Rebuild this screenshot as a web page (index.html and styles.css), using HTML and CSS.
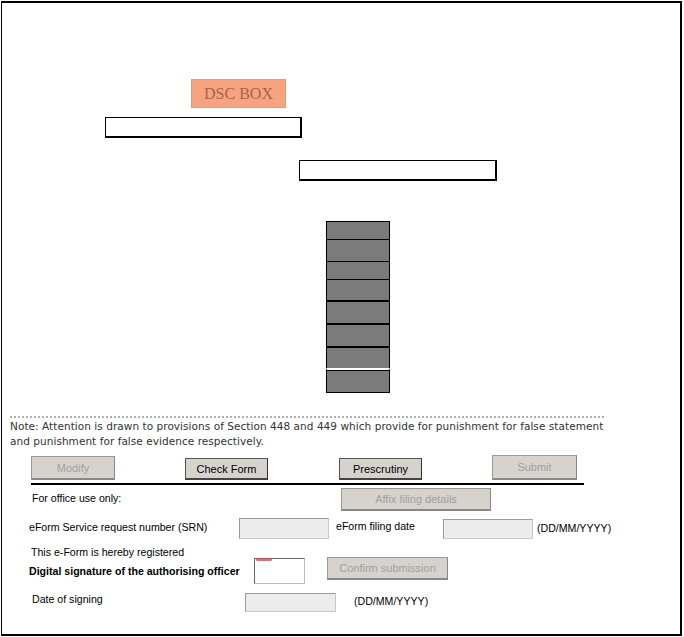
FILE: index.html
```html
<!DOCTYPE html>
<html>
<head>
<meta charset="utf-8">
<link rel="stylesheet" href="styles.css">
</head>
<body>
<div class="page">
  <div class="dsc">DSC BOX</div>
  <div class="field field1"></div>
  <div class="field field2"></div>
  <div class="stack">
    <div class="cell h18"></div>
    <div class="cell h22"></div>
    <div class="cell h18"></div>
    <div class="cell h21"></div>
    <div class="cell h23 thick"></div>
    <div class="cell h23 thick"></div>
    <div class="cell h22 thick"></div>
    <div class="cell last"></div>
  </div>
  <div class="rule"></div>
  <div class="note">Note: Attention is drawn to provisions of Section 448 and 449 which provide for punishment for false statement<br>and punishment for false evidence respectively.</div>
  <div class="btnrow">
    <div class="btn dis b-modify">Modify</div>
    <div class="btn b-check">Check Form</div>
    <div class="btn b-pre">Prescrutiny</div>
    <div class="btn dis b-submit">Submit</div>
  </div>
  <div class="blackline"></div>
  <div class="row r-office">
    <span class="lbl l-office">For office use only:</span>
    <div class="btn dis b-affix">Affix filing details</div>
  </div>
  <div class="row r-srn">
    <span class="lbl l-srn">eForm Service request number (SRN)</span>
    <div class="gbox g-srn"></div>
    <span class="lbl l-fdate">eForm filing date</span>
    <div class="gbox g-fdate"></div>
    <span class="lbl l-fmt">(DD/MM/YYYY)</span>
  </div>
  <div class="row r-reg">
    <span class="lbl l-reg">This e-Form is hereby registered</span>
  </div>
  <div class="row r-sig">
    <span class="lbl bold l-sig">Digital signature of the authorising officer</span>
    <div class="sigbox"><span class="mark"></span></div>
    <div class="btn dis b-confirm">Confirm submission</div>
  </div>
  <div class="row r-date">
    <span class="lbl l-date">Date of signing</span>
    <div class="gbox g-date"></div>
    <span class="lbl l-fmt2">(DD/MM/YYYY)</span>
  </div>
</div>
</body>
</html>
```

FILE: styles.css
```css
* { box-sizing: border-box; }
html, body { margin: 0; padding: 0; background: #fff; }
body { font-family: "Liberation Sans", Arial, sans-serif; font-size: 10.6px; color: #000; }
.page {
  margin: 1px 0 0 1px;
  width: 681px;
  height: 635px;
  border: 1px solid #000;
  border-width: 2px 2px 2px 1px;
  overflow: hidden;
}
.dsc {
  margin: 76px 0 0 189px;
  width: 95px;
  height: 29px;
  background: #f7a37f;
  border: 1px solid #e89a78;
  color: #a8644c;
  font-family: "Liberation Serif", "Times New Roman", serif;
  font-size: 16px;
  line-height: 27px;
  text-align: center;
}
.field { height: 21px; border: 1px solid #000; border-width: 1px 2px 2px 1px; background: #fff; }
.field1 { margin: 9px 0 0 103px; width: 197px; }
.field2 { margin: 22px 0 0 297px; width: 198px; }
.stack {
  margin: 40px 0 0 324px;
  width: 64px;
  border-bottom: 1px solid #000;
}
.cell {
  background: #7b7b7b;
  border-left: 1px solid #000;
  border-right: 1px solid #000;
  border-top: 1px solid #000;
}
.cell.thick { border-top-width: 2px; }
.h18 { height: 18px; }
.h21 { height: 21px; }
.h22 { height: 22px; }
.h23 { height: 23px; }
.cell.last { height: 24px; border-top: 2px solid #fff; box-shadow: inset 0 1px 0 #000; }
.rule {
  margin: 23px 0 0 8px;
  width: 594px;
  border-top: 2px dotted #b0b0b0;
}
.note {
  margin: 1px 0 0 8px;
  font-family: "DejaVu Sans", Verdana, sans-serif;
  font-size: 10.5px;
  line-height: 15px;
  color: #333;
  letter-spacing: 0.05px;
  white-space: nowrap;
}
.btnrow {
  display: flex;
  align-items: flex-end;
  height: 25px;
  margin-top: 6px;
}
.btn {
  background: #d6d3ce;
  border: 1px solid #555;
  border-right-color: #333;
  border-bottom: 2px solid #444;
  color: #000;
  font-size: 11px;
  display: flex;
  align-items: center;
  justify-content: center;
  white-space: nowrap;
}
.btn.dis { color: #a0a0a0; border-color: #999; border-bottom-color: #888; border-right-color: #888; }
.b-modify { margin-left: 29px; width: 84px; height: 24px; }
.b-check { margin-left: 70px; width: 83px; height: 22px; }
.b-pre { margin-left: 71px; width: 83px; height: 22px; }
.b-submit { margin-left: 70px; width: 85px; height: 25px; }
.blackline {
  margin: 3px 0 0 29px;
  width: 553px;
  height: 2px;
  background: #000;
}
.row { display: flex; align-items: center; }
.lbl { white-space: nowrap; position: relative; }
.bold { font-weight: bold; }
.r-office { height: 23px; margin-top: 3px; }
.l-office { margin-left: 30px; width: 309px; top: -2px; }
.b-affix { width: 150px; height: 23px; }
.r-srn { height: 21px; margin-top: 7px; }
.l-srn { margin-left: 27px; width: 210px; top: -2px; }
.gbox { background: #ececec; border: 1px solid #9a9a9a; border-color: #9a9a9a #c8c8c8 #c8c8c8 #9a9a9a; }
.g-srn { width: 90px; height: 21px; }
.l-fdate { margin-left: 7px; width: 107px; top: -3px; }
.g-fdate { width: 90px; height: 20px; }
.l-fmt { margin-left: 4px; top: -1px; }
.r-reg { height: 14px; margin-top: 6px; }
.l-reg { margin-left: 29px; }
.r-sig { height: 26px; margin-top: -1px; align-items: flex-start; }
.l-sig { margin-left: 27px; width: 225px; margin-top: 7px; }
.sigbox { width: 51px; height: 26px; border: 1px solid #777; border-color: #666 #bbb #bbb #666; background: #fff; position: relative; }
.mark { position: absolute; left: 1px; top: -1px; width: 16px; height: 3px; border-radius: 2px; background: #c0504d; opacity: 0.8; }
.b-confirm { margin-left: 22px; margin-top: -1px; width: 121px; height: 23px; }
.r-date { height: 19px; margin-top: 9px; }
.l-date { margin-left: 30px; width: 213px; top: -4px; }
.g-date { width: 91px; height: 19px; }
.l-fmt2 { margin-left: 18px; top: -2px; }
```
